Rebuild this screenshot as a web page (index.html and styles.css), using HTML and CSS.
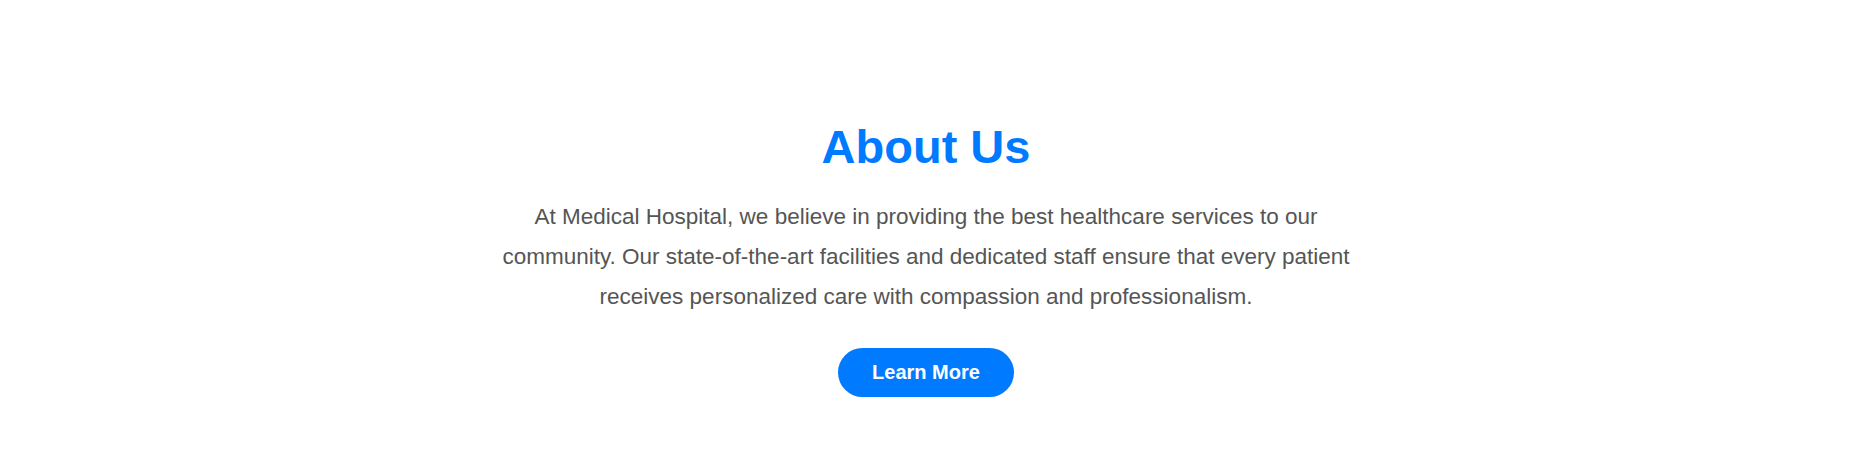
FILE: index.html
```html
<!DOCTYPE html>
<html lang="en">
<head>
<meta charset="utf-8">
<title>About Us</title>
<link rel="stylesheet" href="styles.css">
</head>
<body>
<section class="about">
  <div class="about-inner">
    <h2 class="about-title">About Us</h2>
    <p class="about-text">At Medical Hospital, we believe in providing the best healthcare services to our community. Our state-of-the-art facilities and dedicated staff ensure that every patient receives personalized care with compassion and professionalism.</p>
    <a class="btn" href="#">Learn More</a>
  </div>
</section>
</body>
</html>
```

FILE: styles.css
```css
html, body {
  margin: 0;
  padding: 0;
  background: #ffffff;
}

body {
  font-family: "Liberation Sans", Arial, sans-serif;
}

.about {
  padding: 119px 12px 0 0;
  display: flex;
  justify-content: center;
}

.about-inner {
  max-width: 880px;
  display: flex;
  flex-direction: column;
  align-items: center;
  text-align: center;
}

.about-title {
  margin: 0 0 23px;
  font-size: 47px;
  font-weight: 700;
  color: #007bff;
}

.about-text {
  margin: 0 0 31px;
  font-size: 22.5px;
  line-height: 40px;
  color: #555555;
}

.btn {
  display: inline-block;
  padding: 13px 34px;
  background: #007bff;
  color: #ffffff;
  font-size: 20px;
  font-weight: 700;
  text-decoration: none;
  border-radius: 25px;
}
```
